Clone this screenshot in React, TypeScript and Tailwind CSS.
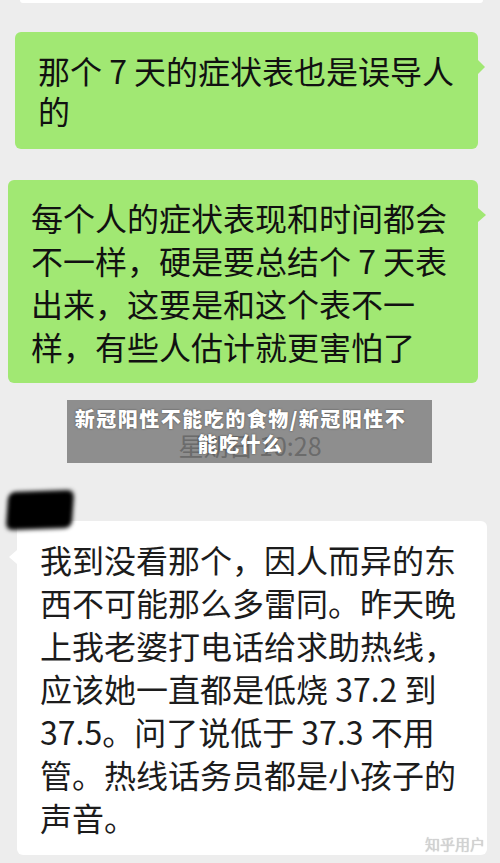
const FONT = "font-['Noto_Sans_CJK_SC','Noto_Sans',sans-serif]";

const GREEN = 'bg-[#a1e873]';

function Lines({ lines }: { lines: string[] }) {
  return (
    <>
      {lines.map((l, i) => (
        <div key={i} className="whitespace-nowrap">
          {l}
        </div>
      ))}
    </>
  );
}

export default function App() {
  return (
    <div className={`relative flex h-[863px] w-[500px] flex-col overflow-hidden bg-[#ededed] ${FONT}`}>
      {/* previous bubble bottom edge */}
      <div className="ml-[20px] h-[3px] w-[463px] rounded-b-[4px] bg-white" />

      {/* outgoing 1 */}
      <div
        className={`relative mt-[29px] ml-[15px] w-[463px] rounded-[6px] ${GREEN} pt-[18px] pb-[19px] pl-[23px] text-[32px] leading-[40px] text-[#111]`}
      >
        <Lines lines={['那个 7 天的症状表也是误导人', '的']} />
        <span className="absolute top-[28px] right-[-7px] h-0 w-0 border-y-[7px] border-l-[7px] border-y-transparent border-l-[#a1e873]" />
      </div>

      {/* outgoing 2 */}
      <div
        className={`relative mt-[31px] ml-[8px] w-[470px] rounded-[6px] ${GREEN} pt-[16px] pb-[15px] pl-[23px] text-[32px] leading-[43px] text-[#111]`}
      >
        <Lines
          lines={[
            '每个人的症状表现和时间都会',
            '不一样，硬是要总结个 7 天表',
            '出来，这要是和这个表不一',
            '样，有些人估计就更害怕了',
          ]}
        />
        <span className="absolute top-[28px] right-[-8px] h-0 w-0 border-y-[7px] border-l-[8px] border-y-transparent border-l-[#a1e873]" />
      </div>

      {/* time */}
      <div className="mt-[47px] text-center text-[25px] leading-[30px] text-[#b2b2b2]">星期日 10:28</div>

      {/* incoming */}
      <div className="relative mt-[61px] ml-[17px] w-[470px] rounded-[6px] bg-white pt-[17px] pb-[16px] pl-[23px] text-[32px] leading-[43px] text-[#1c1c1c]">
        <Lines
          lines={[
            '我到没看那个，因人而异的东',
            '西不可能那么多雷同。昨天晚',
            '上我老婆打电话给求助热线，',
            '应该她一直都是低烧 37.2 到',
            '37.5。问了说低于 37.3 不用',
            '管。热线话务员都是小孩子的',
            '声音。',
          ]}
        />
        <span className="absolute top-[29px] left-[-8px] h-0 w-0 border-y-[7px] border-r-[8px] border-y-transparent border-r-white" />
        {/* redaction scribble */}
        <span className="absolute top-[-30px] left-[-10px] h-[38px] w-[66px] -skew-x-6 -rotate-2 rounded-[7px] bg-black blur-[2px]" />
        <span className="absolute right-[2px] bottom-[2px] text-[15px] leading-[18px] text-[#d2d2d2] [text-shadow:0_0_1px_#bbb]">
          知乎用户
        </span>
      </div>

      {/* caption banner */}
      <div className="absolute top-[400px] left-[67px] flex h-[63px] w-[365px] flex-col items-center justify-center bg-black/40 pr-[18px] pb-[2px] text-center text-[20px] leading-[25px] font-black tracking-[1.5px] text-white [text-shadow:0_0_2px_rgba(0,0,0,0.5)]">
        <div className="whitespace-nowrap">新冠阳性不能吃的食物/新冠阳性不</div>
        <div className="whitespace-nowrap">能吃什么</div>
      </div>
    </div>
  );
}
